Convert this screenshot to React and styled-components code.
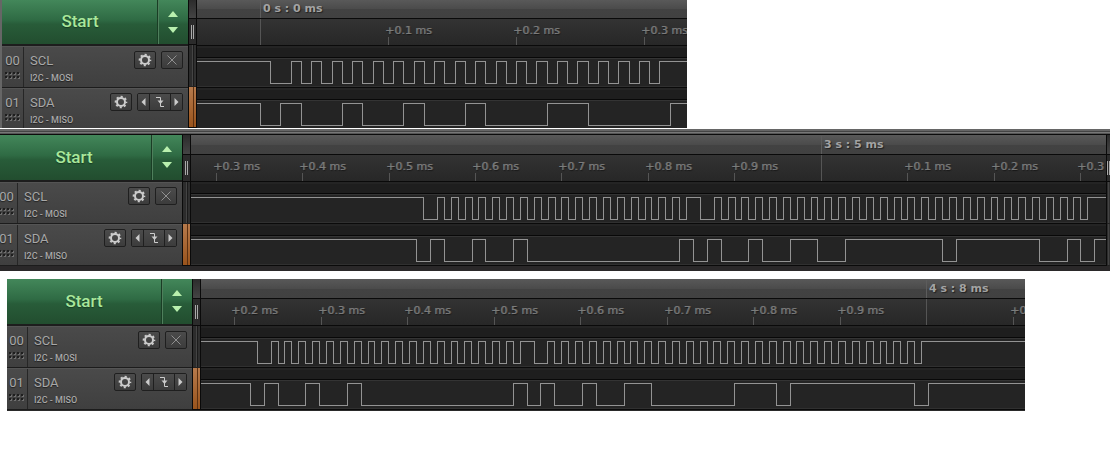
import React from 'react'
import styled, { createGlobalStyle } from 'styled-components'

const GlobalStyle = createGlobalStyle`
  body {
    margin: 0;
    background: #fff;
    font-family: Roboto, 'Liberation Sans', sans-serif;
  }
  button {
    font: inherit;
    cursor: pointer;
  }
`

const Page = styled.main`
  display: flex;
  flex-direction: column;
`

const Capture = styled.section`
  display: flex;
  box-sizing: border-box;
  max-width: ${(p) => p.$maxWidth}px;
  background: #222;
  overflow: hidden;
`

const FirstCapture = styled(Capture)`
  max-height: 128px;
  border-left: 2px solid #666;
`

const ThirdCapture = styled(Capture)`
  margin: 8px 0 0 7px;
  border-bottom: 1px solid #2a2a2a;
`

const Window = styled.div`
  max-width: 1110px;
  margin-top: 1px;
  border-bottom: 5px solid #2a2829;
`

const TitleEdge = styled.div`
  height: 5px;
  background: linear-gradient(#666 40%, #444 40%, #444 60%, #777 60%, #777 80%, #555 80%);
  border-bottom: 1px solid #0c0c0c;
`

/* sidebar, scrolled to its right edge when there is less room */
const SidebarClip = styled.div`
  flex: none;
  display: flex;
  justify-content: flex-end;
  width: ${(p) => p.$width}px;
  overflow: hidden;
`

const Sidebar = styled.div`
  flex: none;
  width: 186px;
`

const StartBar = styled.div`
  display: flex;
  height: ${(p) => p.$height}px;
  border-bottom: 2px solid #1d1d1d;
`

const StartButton = styled.button`
  flex: 1;
  padding: 0 0 2px;
  border: 0;
  border-right: 1px solid #4f7f5c;
  background: linear-gradient(#43875a, #2f6b44 45%, #285c39 55%, #224d2f);
  color: #a9e79b;
  font-size: 17px;
  font-weight: 500;
  text-shadow: 0 1px 1px #173d22;
  box-shadow: inset -1px 0 #1a3d25;
`

const StepButton = styled(StartButton)`
  flex: none;
  display: flex;
  align-items: center;
  justify-content: center;
  width: 29px;
  padding: 0 1px 1px 0;
  border-right: 0;
  box-shadow: none;
`

const Channel = styled.div`
  display: flex;
  box-sizing: border-box;
  height: 42px;
  border-top: 1px solid #545454;
  border-bottom: 1px solid #1c1c1c;
  background: linear-gradient(#4a4a4a, #3f3f3f);
  color: #a8a8a8;
  text-shadow: 0 1px 1px #222;
`

const Index = styled.div`
  display: flex;
  flex-direction: column;
  align-items: center;
  gap: 3px;
  box-sizing: border-box;
  width: 22px;
  padding-top: 6px;
  border-right: 1px solid #262626;
  font-size: 13px;
  line-height: 16px;
`

const Info = styled.div`
  flex: 1;
  padding: 6px 0 0 6px;
`

const Name = styled.div`
  font-size: 13px;
  line-height: 16px;
`

const Protocol = styled.div`
  margin-top: 3px;
  font-size: 9px;
  font-weight: 500;
  line-height: 12px;
`

const Tools = styled.div`
  display: flex;
  align-items: flex-start;
  gap: 5px;
  padding: 4px 5px 0 0;
`

const ToolButton = styled.button`
  display: flex;
  align-items: center;
  justify-content: center;
  box-sizing: border-box;
  width: 22px;
  height: 18px;
  padding: 0;
  border: 1px solid #1f1f1f;
  border-radius: 2px;
  background: linear-gradient(#4b4b4b, #3c3c3c);
  color: ${(p) => (p.$dim ? '#999' : '#ccc')};
`

const TriggerGroup = styled.div`
  display: flex;
  overflow: hidden;
  box-sizing: border-box;
  height: 18px;
  border: 1px solid #1f1f1f;
  border-radius: 2px;
`

const TriggerButton = styled(ToolButton)`
  width: ${(p) => p.$width}px;
  height: 16px;
  border: 0;
  border-radius: 0;
  & + & {
    border-left: 1px solid #1f1f1f;
  }
`

const Gutter = styled.div`
  flex: none;
  display: flex;
  flex-direction: column;
  box-sizing: border-box;
  width: ${(p) => p.$width || 9}px;
  overflow: hidden;
  border-left: 1px solid #0a0a0a;
  border-right: ${(p) => (p.$width ? 0 : 1)}px solid #0a0a0a;
`

const GutterTop = styled.div`
  height: ${(p) => p.$height}px;
  border-bottom: 1px solid #0a0a0a;
  background: linear-gradient(#2c2c2c, #444);
`

const GutterHandle = styled.div`
  display: flex;
  align-items: center;
  justify-content: center;
  height: 26px;
  border-bottom: 1px solid #0a0a0a;
  background: #2b2b2b;
  &::after {
    content: '';
    width: 1px;
    height: 14px;
    border: solid #aaa;
    border-width: 0 1px;
  }
`

const GutterCell = styled.div`
  height: 41px;
  border-bottom: 1px solid ${(p) => (p.$active ? '#0a0a0a' : '#222')};
  background: ${(p) =>
    p.$active
      ? 'linear-gradient(90deg, transparent 57%, #5c3010 57%, #5c3010 71%, transparent 71%), linear-gradient(#b67a4c, #9a541c)'
      : 'linear-gradient(90deg, #2c2c2c 43%, #444 43%, #444 57%, #1b1b1b 57%, #1b1b1b 71%, #303030 71%)'};
`

const Plot = styled.div`
  flex: 1;
  min-width: 0;
  overflow: hidden;
`

const Band = styled.div`
  display: flex;
  align-items: flex-end;
  height: ${(p) => p.$height}px;
  border-bottom: 1px solid #0a0a0a;
  background: linear-gradient(#595959, #4b4b4b 50%, #424242 52%, #414141);
`

const BandLabel = styled.span`
  border-left: 1px solid #5c5c5c;
  padding-left: 2px;
  color: #a3a3a3;
  font: bold 11px/18px 'DejaVu Sans', sans-serif;
  white-space: nowrap;
  text-shadow: 1px 1px 1px #222;
`

const Scale = styled.div`
  display: flex;
  height: 26px;
  overflow: hidden;
  border-bottom: 1px solid #0a0a0a;
  background: linear-gradient(#333, #272727);
`

const Spacer = styled.div`
  flex: none;
`

const Tick = styled.div`
  flex: none;
  display: flex;
  flex-direction: column;
  justify-content: flex-end;
  color: #7c7c7c;
  font: 11px/13px 'DejaVu Sans', sans-serif;
  white-space: nowrap;
  text-shadow: 1px 0 0 #5c5c5c, 1px 1px 1px #161616;
  &::after {
    content: '';
    width: 1px;
    height: ${(p) => (p.$major ? 26 : 8)}px;
    margin-left: 3px;
    background: #555;
  }
`

const Lane = styled.div`
  height: 30px;
  box-sizing: border-box;
  border-top: 1px solid #343434;
  border-bottom: 1px solid #0a0a0a;
  background: #242424;
  box-shadow: inset 0 -1px #303030;
`

const LaneHead = styled.div`
  height: 11px;
  border-bottom: 1px solid #080808;
  background: linear-gradient(#242424 18%, #1e1e1e 18%);
`

const Wave = styled.svg`
  display: block;
  width: 100%;
  height: 27px;
  fill: none;
  stroke: #939393;
  shape-rendering: crispEdges;
`

const GearIcon = () => (
  <svg width="14" height="14" viewBox="0 0 14 14" fill="none" stroke="currentColor">
    <circle cx="7" cy="7" r="4" strokeWidth="2" />
    <circle cx="7" cy="7" r="5.4" strokeWidth="1.8" strokeDasharray="2.12 2.12" strokeDashoffset="1.06" />
  </svg>
)

const CloseIcon = () => (
  <svg width="10" height="10" viewBox="0 0 10 10" stroke="currentColor" strokeWidth="0.9">
    <path d="M0.5 0.5L9.5 9.5M9.5 0.5L0.5 9.5" />
  </svg>
)

const EdgeIcon = () => (
  <svg width="10" height="12" viewBox="0 0 10 12" fill="none" stroke="currentColor">
    <path d="M1 1.5H5.5V10.5H9" />
    <path d="M2.5 4.5H8.5L5.5 8Z" fill="currentColor" stroke="none" />
  </svg>
)

const ArrowIcon = ({ left }) => (
  <svg width="5" height="8" viewBox="0 0 5 8" fill="currentColor">
    <path d={left ? 'M4.5 0V8L0.5 4Z' : 'M0.5 0V8L4.5 4Z'} />
  </svg>
)

const StepIcon = () => (
  <svg width="10" height="22" viewBox="0 0 10 22" fill="#b9f0ae">
    <path d="M0 6L5 0L10 6Z" />
    <path d="M0 16H10L5 22Z" />
  </svg>
)

const GripIcon = () => (
  <svg width="15" height="7" viewBox="0 0 15 7" shapeRendering="crispEdges">
    {[0, 4, 8, 12].map((x) =>
      [0, 4].map((y) => (
        <g key={`${x}-${y}`}>
          <rect x={x + 1} y={y + 1} width="2" height="2" fill="#707070" />
          <rect x={x} y={y} width="2" height="2" fill="#1e1e1e" />
        </g>
      ))
    )}
  </svg>
)

const HIGH = 2.5
const LOW = 24.5

const Signal = ({ origin, edges }) => {
  let path = `M0 ${HIGH}`
  edges.forEach((x, i) => {
    path += `H${x - origin + 0.5}V${i % 2 ? HIGH : LOW}`
  })
  return (
    <>
      <LaneHead />
      <Lane>
        <Wave aria-hidden="true">
          <path d={`${path}H4000`} />
        </Wave>
      </Lane>
    </>
  )
}

const Controls = ({ width, top }) => (
  <SidebarClip $width={width}>
    <Sidebar>
      <StartBar $height={top + 26}>
        <StartButton>Start</StartButton>
        <StepButton aria-label="Capture settings">
          <StepIcon />
        </StepButton>
      </StartBar>
      <Channel>
        <Index>
          00
          <GripIcon />
        </Index>
        <Info>
          <Name>SCL</Name>
          <Protocol>I2C - MOSI</Protocol>
        </Info>
        <Tools>
          <ToolButton aria-label="SCL settings">
            <GearIcon />
          </ToolButton>
          <ToolButton aria-label="Remove SCL trigger" $dim>
            <CloseIcon />
          </ToolButton>
        </Tools>
      </Channel>
      <Channel>
        <Index>
          01
          <GripIcon />
        </Index>
        <Info>
          <Name>SDA</Name>
          <Protocol>I2C - MISO</Protocol>
        </Info>
        <Tools>
          <ToolButton aria-label="SDA settings">
            <GearIcon />
          </ToolButton>
          <TriggerGroup>
            <TriggerButton aria-label="Previous edge" $width={11}>
              <ArrowIcon left />
            </TriggerButton>
            <TriggerButton aria-label="Falling edge trigger" $width={21}>
              <EdgeIcon />
            </TriggerButton>
            <TriggerButton aria-label="Next edge" $width={12}>
              <ArrowIcon />
            </TriggerButton>
          </TriggerGroup>
        </Tools>
      </Channel>
    </Sidebar>
  </SidebarClip>
)

const Splitter = ({ top, width }) => (
  <Gutter $width={width}>
    <GutterTop $height={top} />
    <GutterHandle />
    <GutterCell />
    <GutterCell $active={!width} />
  </Gutter>
)

const Timeline = ({ data, top }) => {
  const { origin, major, ticks } = data
  return (
    <Plot>
      <Band $height={top}>
        <Spacer style={{ width: major.at - origin }} />
        <BandLabel>{major.label}</BandLabel>
      </Band>
      <Scale>
        <Spacer style={{ width: ticks[0][0] - origin - 3 }} />
        {ticks.map(([at, label], i) => (
          <Tick
            key={at}
            $major={!label}
            style={{ width: (ticks[i + 1] ? ticks[i + 1][0] : at + 20) - at }}
          >
            {label}
          </Tick>
        ))}
      </Scale>
      <Signal origin={origin} edges={data.scl} />
      <Signal origin={origin} edges={data.sda} />
    </Plot>
  )
}

const first = {
  origin: 197,
  major: { at: 260, label: '0 s : 0 ms' },
  ticks: [[260, ''], [388, '+0.1 ms'], [516, '+0.2 ms'], [644, '+0.3 ms']],
  scl: [
    270, 291, 301, 311, 321, 332, 342, 352, 362, 373, 383, 393, 403, 414, 424, 434, 444, 455, 465,
    475, 485, 496, 506, 516, 526, 536, 547, 557, 567, 577, 588, 598, 608, 618, 629, 639, 649, 659,
  ],
  sda: [260, 280, 301, 342, 362, 403, 424, 465, 485, 547, 588, 670],
}

const second = {
  origin: 191,
  major: { at: 821, label: '3 s : 5 ms' },
  ticks: [
    [216, '+0.3 ms'], [302, '+0.4 ms'], [389, '+0.5 ms'], [475, '+0.6 ms'], [561, '+0.7 ms'],
    [648, '+0.8 ms'], [734, '+0.9 ms'], [821, ''], [907, '+0.1 ms'], [994, '+0.2 ms'],
    [1080, '+0.3'],
  ],
  scl: [
    423, 437, 444, 451, 458, 465, 472, 478, 485, 492, 499, 506, 513, 520, 527, 534, 541, 548, 555,
    561, 568, 575, 582, 589, 596, 603, 610, 617, 624, 631, 638, 645, 651, 658, 665, 672, 679, 686,
    700, 714, 721, 728, 735, 741, 748, 755, 762, 769, 776, 783, 790, 797, 804, 811, 817, 824, 831,
    838, 845, 852, 859, 866, 873, 880, 887, 894, 901, 907, 914, 921, 928, 935, 942, 949, 956, 963,
    970, 977, 984, 991, 997, 1004, 1011, 1018, 1025, 1032, 1039, 1046, 1053, 1060, 1067, 1073,
    1080, 1087,
  ],
  sda: [
    416, 430, 444, 472, 485, 513, 527, 679, 693, 707, 721, 748, 762, 790, 817, 845, 942, 956, 1039,
    1067, 1080, 1094,
  ],
}

const third = {
  origin: 201,
  major: { at: 926, label: '4 s : 8 ms' },
  ticks: [
    [234, '+0.2 ms'], [321, '+0.3 ms'], [407, '+0.4 ms'], [494, '+0.5 ms'], [580, '+0.6 ms'],
    [667, '+0.7 ms'], [753, '+0.8 ms'], [840, '+0.9 ms'], [926, ''], [1013, '+0'],
  ],
  scl: [
    257, 271, 278, 284, 291, 298, 305, 312, 319, 326, 333, 340, 347, 354, 361, 368, 374, 381, 388,
    395, 402, 409, 416, 423, 430, 437, 444, 451, 457, 464, 471, 478, 485, 492, 499, 506, 513, 520,
    534, 547, 554, 561, 568, 575, 582, 589, 596, 603, 610, 617, 624, 630, 637, 644, 651, 658, 665,
    672, 679, 686, 693, 700, 707, 713, 720, 727, 734, 741, 748, 755, 762, 769, 776, 783, 790, 796,
    803, 810, 817, 824, 831, 838, 845, 852, 859, 866, 873, 880, 886, 893, 900, 907, 914, 921,
  ],
  sda: [
    250, 264, 278, 305, 319, 347, 361, 513, 527, 540, 554, 582, 596, 624, 651, 734, 776, 790, 914,
    928,
  ],
}

const App = () => {
  return (
    <Page>
      <GlobalStyle />
      <FirstCapture $maxWidth={687}>
        <Controls width={186} top={18} />
        <Splitter top={18} />
        <Timeline data={first} top={18} />
      </FirstCapture>
      <Window>
        <TitleEdge />
        <Capture $maxWidth={1110}>
          <Controls width={182} top={19} />
          <Splitter top={19} />
          <Timeline data={second} top={19} />
          <Splitter top={19} width={4} />
        </Capture>
      </Window>
      <ThirdCapture $maxWidth={1018}>
        <Controls width={185} top={19} />
        <Splitter top={19} />
        <Timeline data={third} top={19} />
      </ThirdCapture>
    </Page>
  )
}

export default App
